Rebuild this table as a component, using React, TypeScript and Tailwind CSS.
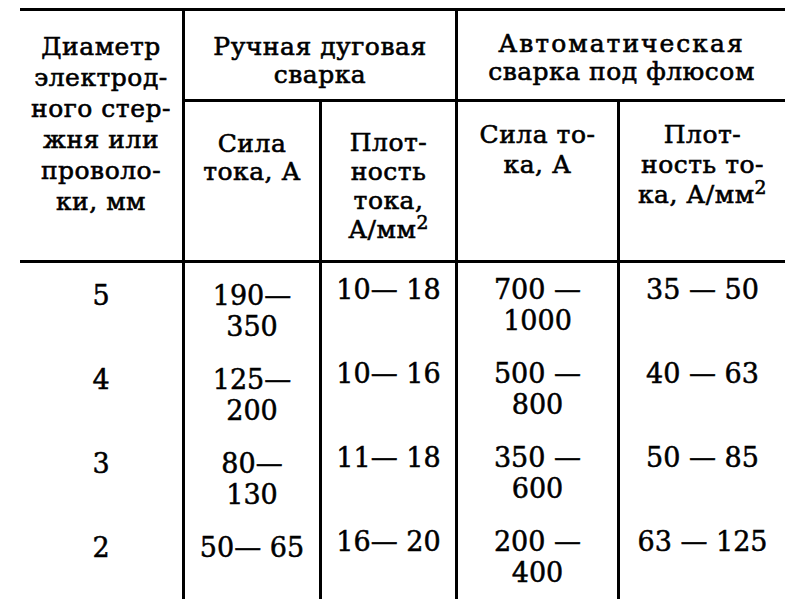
const head = "font-['DejaVu_Serif',serif] text-[25px] tracking-[0.5px] text-black text-center whitespace-nowrap [-webkit-text-stroke:0.6px_black]";
const num = "font-['DejaVu_Serif',serif] text-[27px] leading-[31px] text-black text-center whitespace-nowrap [-webkit-text-stroke:0.5px_black]";

const rows = [
  { d: "5", a: ["190—", "350"], b: "10— 18", c: ["700 —", "1000"], e: "35 — 50" },
  { d: "4", a: ["125—", "200"], b: "10— 16", c: ["500 —", "800"], e: "40 — 63" },
  { d: "3", a: ["80—", "130"], b: "11— 18", c: ["350 —", "600"], e: "50 — 85" },
  { d: "2", a: ["50— 65"], b: "16— 20", c: ["200 —", "400"], e: "63 — 125" },
];

function Lines({ items }: { items: string[] }) {
  return (
    <>
      {items.map((t, i) => (
        <div key={i}>{t}</div>
      ))}
    </>
  );
}

export default function App() {
  return (
    <div className="w-[796px] h-[610px] bg-white overflow-hidden">
      <div className="ml-[20px] mt-[8px] w-[765px] border-t-[3px] border-black">
        {/* header */}
        <div className="grid grid-cols-[165px_137px_136px_162px_165px] grid-rows-[91px_158px] border-b-[3px] border-black">
          <div className={`row-span-2 border-r-[3px] border-black pt-[20px] leading-[31px] ${head}`}>
            <Lines items={["Диаметр", "электрод-", "ного стер-", "жня или", "проволо-", "ки, мм"]} />
          </div>
          <div className={`col-span-2 border-r-[3px] border-b-[3px] border-black pt-[22px] leading-[28px] ${head}`}>
            <Lines items={["Ручная дуговая", "сварка"]} />
          </div>
          <div className={`col-span-2 border-b-[3px] border-black pt-[19px] leading-[28px] ${head}`}>
            <div className="tracking-[2px]">Автоматическая</div>
            <div>сварка под флюсом</div>
          </div>
          <div className={`border-r-[3px] border-black pt-[28px] leading-[28px] ${head}`}>
            <Lines items={["Сила", "тока, А"]} />
          </div>
          <div className={`border-r-[3px] border-black pt-[26px] leading-[29px] ${head}`}>
            <Lines items={["Плот-", "ность", "тока,"]} />
            <div>
              А/мм<sup>2</sup>
            </div>
          </div>
          <div className={`border-r-[3px] border-black pt-[18px] leading-[30px] ${head}`}>
            <Lines items={["Сила то-", "ка, А"]} />
          </div>
          <div className={`pt-[18px] leading-[30px] ${head}`}>
            <Lines items={["Плот-", "ность то-"]} />
            <div>
              ка, А/мм<sup>2</sup>
            </div>
          </div>
        </div>

        {/* body */}
        <div className="grid grid-cols-[165px_137px_136px_162px_165px]">
          {rows.map((r, i) => (
            <div key={i} className="contents">
              <div className={`h-[84px] border-r-[3px] border-black pt-[17px] ${num}`}>{r.d}</div>
              <div className={`h-[84px] border-r-[3px] border-black pt-[17px] ${num}`}>
                <Lines items={r.a} />
              </div>
              <div className={`h-[84px] border-r-[3px] border-black pt-[11px] ${num}`}>{r.b}</div>
              <div className={`h-[84px] border-r-[3px] border-black pt-[11px] ${num}`}>
                <Lines items={r.c} />
              </div>
              <div className={`h-[84px] pt-[11px] ${num}`}>{r.e}</div>
            </div>
          ))}
        </div>
      </div>
    </div>
  );
}
